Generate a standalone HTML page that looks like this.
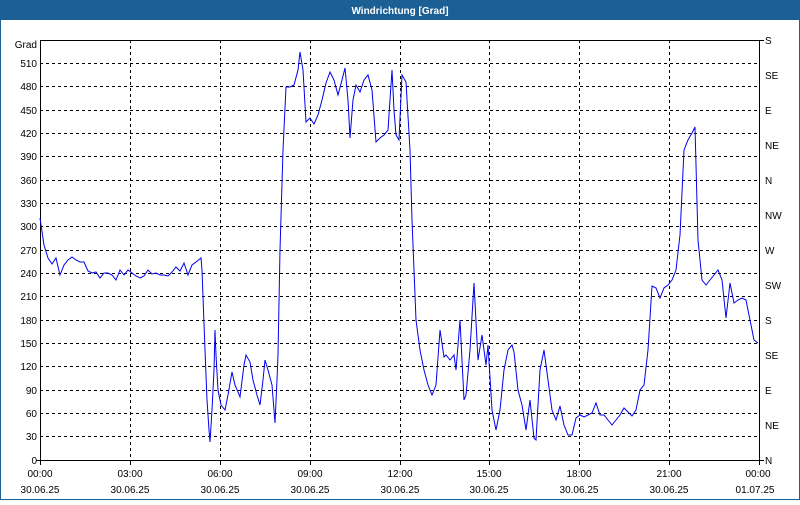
<!DOCTYPE html>
<html><head><meta charset="utf-8"><style>
html,body{margin:0;padding:0;background:#fff}
body{width:800px;height:500px;overflow:hidden;font-family:"Liberation Sans",sans-serif}
</style></head><body>
<svg width="800" height="500" xmlns="http://www.w3.org/2000/svg" font-family="Liberation Sans, sans-serif" font-size="10">
<rect x="0" y="0" width="800" height="500" fill="#fff"/>
<rect x="0.5" y="0.5" width="799" height="499" fill="none" stroke="#1c5f94"/>
<rect x="0" y="0" width="800" height="20" fill="#1c5f94"/>
<text x="400" y="14" text-anchor="middle" fill="#fff" font-weight="bold" font-size="10">Windrichtung [Grad]</text>
<g stroke="#000" stroke-dasharray="3,3" stroke-width="1">
<line x1="40" x2="760" y1="63.5" y2="63.5"/><line x1="40" x2="760" y1="86.5" y2="86.5"/><line x1="40" x2="760" y1="110.5" y2="110.5"/><line x1="40" x2="760" y1="133.5" y2="133.5"/><line x1="40" x2="760" y1="156.5" y2="156.5"/><line x1="40" x2="760" y1="180.5" y2="180.5"/><line x1="40" x2="760" y1="203.5" y2="203.5"/><line x1="40" x2="760" y1="226.5" y2="226.5"/><line x1="40" x2="760" y1="250.5" y2="250.5"/><line x1="40" x2="760" y1="273.5" y2="273.5"/><line x1="40" x2="760" y1="296.5" y2="296.5"/><line x1="40" x2="760" y1="320.5" y2="320.5"/><line x1="40" x2="760" y1="343.5" y2="343.5"/><line x1="40" x2="760" y1="366.5" y2="366.5"/><line x1="40" x2="760" y1="390.5" y2="390.5"/><line x1="40" x2="760" y1="413.5" y2="413.5"/><line x1="40" x2="760" y1="436.5" y2="436.5"/>
<line y1="40" y2="460" x1="130.5" x2="130.5"/><line y1="40" y2="460" x1="220.5" x2="220.5"/><line y1="40" y2="460" x1="310.5" x2="310.5"/><line y1="40" y2="460" x1="400.5" x2="400.5"/><line y1="40" y2="460" x1="489.5" x2="489.5"/><line y1="40" y2="460" x1="579.5" x2="579.5"/><line y1="40" y2="460" x1="669.5" x2="669.5"/>
</g>
<rect x="40.5" y="40.5" width="719" height="420" fill="none" stroke="#000"/>
<g stroke="#000">
<line x1="36" x2="40" y1="460.5" y2="460.5"/><line x1="760" x2="764" y1="460.5" y2="460.5"/><line x1="760" x2="764" y1="40.5" y2="40.5"/>
<line x1="40.5" x2="40.5" y1="460" y2="465"/><line x1="130.5" x2="130.5" y1="460" y2="465"/><line x1="220.5" x2="220.5" y1="460" y2="465"/><line x1="310.5" x2="310.5" y1="460" y2="465"/><line x1="400.5" x2="400.5" y1="460" y2="465"/><line x1="489.5" x2="489.5" y1="460" y2="465"/><line x1="579.5" x2="579.5" y1="460" y2="465"/><line x1="669.5" x2="669.5" y1="460" y2="465"/><line x1="759.5" x2="759.5" y1="460" y2="465"/>
</g>
<g text-anchor="end" fill="#000">
<text x="37" y="48">Grad</text>
<text x="37" y="67">510</text><text x="37" y="90">480</text><text x="37" y="114">450</text><text x="37" y="137">420</text><text x="37" y="160">390</text><text x="37" y="184">360</text><text x="37" y="207">330</text><text x="37" y="230">300</text><text x="37" y="254">270</text><text x="37" y="277">240</text><text x="37" y="300">210</text><text x="37" y="324">180</text><text x="37" y="347">150</text><text x="37" y="370">120</text><text x="37" y="394">90</text><text x="37" y="417">60</text><text x="37" y="440">30</text><text x="37" y="464">0</text>
</g>
<g fill="#000">
<text x="765" y="44">S</text><text x="765" y="79">SE</text><text x="765" y="114">E</text><text x="765" y="149">NE</text><text x="765" y="184">N</text><text x="765" y="219">NW</text><text x="765" y="254">W</text><text x="765" y="289">SW</text><text x="765" y="324">S</text><text x="765" y="359">SE</text><text x="765" y="394">E</text><text x="765" y="429">NE</text><text x="765" y="464">N</text>
</g>
<g text-anchor="middle" fill="#000">
<text x="40" y="477">00:00</text><text x="130" y="477">03:00</text><text x="220" y="477">06:00</text><text x="310" y="477">09:00</text><text x="400" y="477">12:00</text><text x="489" y="477">15:00</text><text x="579" y="477">18:00</text><text x="669" y="477">21:00</text><text x="758" y="477">00:00</text>
<text x="40" y="493">30.06.25</text><text x="130" y="493">30.06.25</text><text x="220" y="493">30.06.25</text><text x="310" y="493">30.06.25</text><text x="400" y="493">30.06.25</text><text x="489" y="493">30.06.25</text><text x="579" y="493">30.06.25</text><text x="669" y="493">30.06.25</text><text x="755" y="493">01.07.25</text>
</g>
<polyline fill="none" stroke="#0000ee" stroke-width="1" points="40,218 44,245 48,258 52,264 56,258 60,275 64,265 68,260 72,257 76,260 80,262 84,262 88,271 92,273 96,272 100,278 104,273 108,273 112,275 116,280 120,270 124,275 128,270 132,273 136,276 140,278 144,276 148,270 152,274 156,273 160,275 164,275 168,276 172,272 176,267 180,271 184,263 188,275 192,265 196,262 201,258 202,270 205,350 207,400 209,430 210,442 212,410 214,370 215,330 216,355 218,390 221,405 225,410 228,395 232,372 235,385 240,397 244,365 246,355 250,362 253,380 257,395 260,405 263,380 265,360 268,370 272,385 275,423 277,380 278,355 280,250 283,150 286,87 290,87 294,85 298,70 300,52 303,70 306,122 310,118 314,124 318,115 322,100 326,83 330,72 334,80 338,95 342,80 345,68 348,100 350,138 353,100 356,85 360,92 364,80 368,75 372,90 376,142 380,138 384,135 388,130 392,70 394,110 396,135 399,140 402,75 406,82 410,150 412,220 416,320 420,350 424,370 428,385 432,395 436,385 440,330 444,357 446,355 450,360 454,355 456,370 460,320 464,400 466,395 470,350 474,283 478,360 482,335 486,365 488,345 492,410 496,430 500,410 504,370 508,350 512,345 514,352 518,390 522,405 526,430 530,400 534,438 536,440 540,370 544,350 548,380 552,410 556,420 560,406 564,425 568,435 572,435 576,418 580,415 584,417 588,415 592,413 596,403 600,415 604,415 608,420 612,425 616,420 620,415 624,408 628,412 632,416 636,410 640,390 644,385 648,350 652,286 656,288 660,298 664,288 668,285 672,280 676,270 680,235 684,150 688,140 692,133 695,127 698,240 702,280 706,285 710,280 714,275 718,270 722,280 726,318 730,283 734,303 738,300 742,298 746,300 750,320 754,340 758,343"/>
</svg>
</body></html>
